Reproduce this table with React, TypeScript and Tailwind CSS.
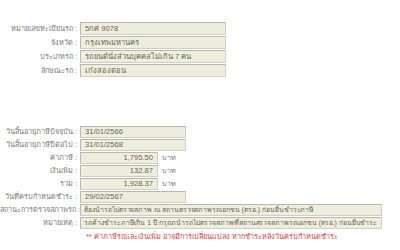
const topRows = [
  { label: "หมายเลขทะเบียนรถ", value: "5กศ 9078" },
  { label: "จังหวัด", value: "กรุงเทพมหานคร" },
  { label: "ประเภทรถ", value: "รถยนต์นั่งส่วนบุคคลไม่เกิน 7 คน" },
  { label: "ลักษณะรถ", value: "เก๋งสองตอน" },
];

type Row = { label: string; value: string; kind: "date" | "money" | "long" };

const taxRows: Row[] = [
  { label: "วันสิ้นอายุภาษีปัจจุบัน", value: "31/01/2566", kind: "date" },
  { label: "วันสิ้นอายุภาษีปีต่อไป", value: "31/01/2568", kind: "date" },
  { label: "ค่าภาษี", value: "1,795.50", kind: "money" },
  { label: "เงินเพิ่ม", value: "132.87", kind: "money" },
  { label: "รวม", value: "1,928.37", kind: "money" },
  { label: "วันที่ครบกำหนดชำระ", value: "29/02/2567", kind: "date" },
  {
    label: "สถานะการตรวจสภาพรถ",
    value: "ต้องนำรถไปตรวจสภาพ ณ สถานตรวจสภาพรถเอกชน (ตรอ.) ก่อนยื่นชำระภาษี",
    kind: "long",
  },
  {
    label: "หมายเหตุ",
    value:
      "รถค้างชำระภาษีเกิน 1 ปี กรุณานำรถไปตรวจสภาพที่สถานตรวจสภาพรถเอกชน (ตรอ.) ก่อนยื่นชำระ",
    kind: "long",
  },
];

const box =
  "border border-[#cfcfc6] border-t-[#b8b8ae] border-l-[#b8b8ae] bg-[#eeeede] text-[#6b6650] overflow-hidden whitespace-nowrap leading-none flex items-center";

function Label({ text }: { text: string }) {
  return (
    <div className="w-[80px] shrink-0 text-right pr-[3px] text-[#7a7a7a] whitespace-nowrap text-[7.3px] leading-none">
      {text}&nbsp;:
    </div>
  );
}

export default function App() {
  return (
    <div className="w-[400px] h-[250px] bg-white overflow-hidden font-['Liberation_Sans','DejaVu_Sans',sans-serif]">
      <div className="pt-[22px] flex flex-col gap-[1px]">
        {topRows.map((r) => (
          <div key={r.label} className="flex items-center h-[13px]">
            <Label text={r.label} />
            <div className={`${box} w-[146px] h-[13px] px-[4px] text-[7.6px]`}>{r.value}</div>
          </div>
        ))}
      </div>

      <div className="pt-[49px] flex flex-col gap-[1px]">
        {taxRows.map((r) => (
          <div key={r.label} className="flex items-center h-[12px]">
            <Label text={r.label} />
            {r.kind === "date" && (
              <div className={`${box} w-[106px] h-[12px] px-[4px] text-[7.6px]`}>{r.value}</div>
            )}
            {r.kind === "money" && (
              <>
                <div className={`${box} w-[78px] h-[12px] px-[4px] justify-end text-[7.6px]`}>
                  {r.value}
                </div>
                <span className="ml-[4px] text-[#7a7a7a] text-[7.2px] leading-none">บาท</span>
              </>
            )}
            {r.kind === "long" && (
              <div className={`${box} w-[302px] h-[12px] px-[3px] text-[6.9px] tracking-[-0.05px]`}>
                {r.value}
              </div>
            )}
          </div>
        ))}
        <div className="flex h-[14px] items-center">
          <div className="w-[86px] shrink-0" />
          <span className="text-[#e0403a] whitespace-nowrap text-[7.3px] leading-none">
            ** ค่าภาษีรถและเงินเพิ่ม อาจมีการเปลี่ยนแปลง หากชำระหลังวันครบกำหนดชำระ
          </span>
        </div>
      </div>
    </div>
  );
}
